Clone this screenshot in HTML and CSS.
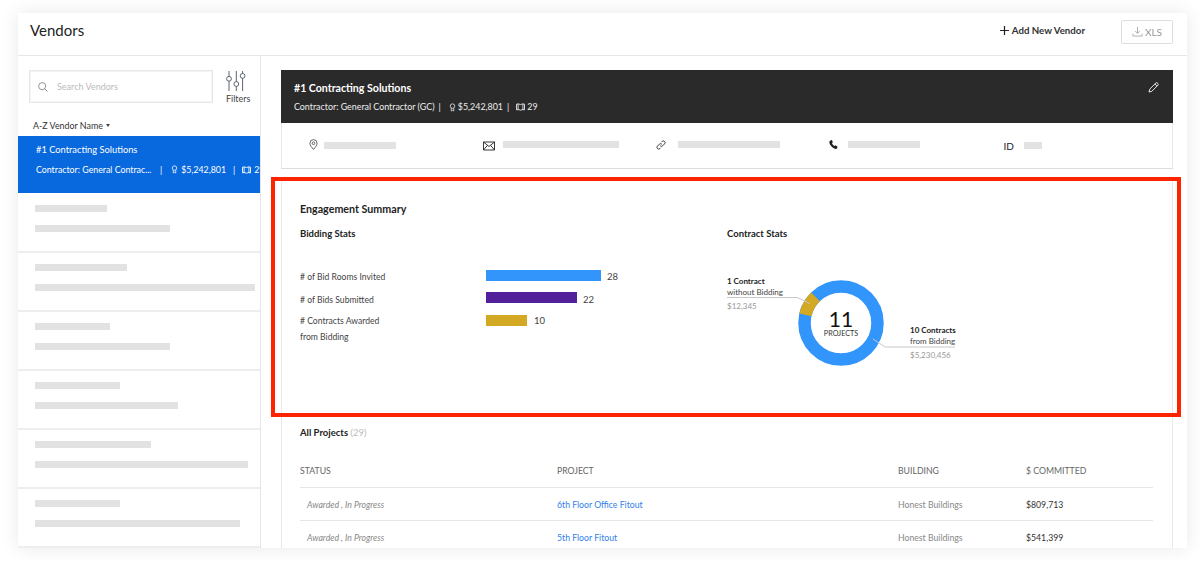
FILE: index.html
```html
<!DOCTYPE html>
<html lang="en">

<head>
  <meta charset="UTF-8">
  <meta name="viewport" content="width=device-width, initial-scale=1.0">
  <title>Vendors</title>
  <link rel="stylesheet" href="styles.css">
</head>

<body>
  <div class="app">
    <!-- header -->
    <header class="header">
      <h1 class="page-title">Vendors</h1>
      <div class="add-vendor">
        <svg class="add-icon" viewBox="0 0 11 11"><path d="M5.5 0v11M0 5.5h11" /></svg>
        Add New Vendor
      </div>
      <div class="xls-btn">
        <svg class="xls-icon" viewBox="0 0 12 12"><path d="M6 1v7M3.5 5.5L6 8l2.5-2.5M1 8.5V11h10V8.5" /></svg>
        XLS
      </div>
    </header>

    <div class="body">
      <!-- vendor list -->
      <aside class="sidebar">
        <div class="search-row">
          <div class="search-box">
            <svg class="search-icon" viewBox="0 0 11 11"><circle cx="4.6" cy="4.6" r="3.9" /><path d="M7.5 7.5l3 3" /></svg>
            <span>Search Vendors</span>
          </div>
          <div class="filters">
            <svg class="filters-icon" viewBox="0 0 20 20">
              <path d="M3 0v5.600M3 10v10M10.300 0v10.700M10.300 15.200V20M16.600 0v2.600M16.600 7.200V20" />
              <circle cx="3" cy="7.800" r="2.400" />
              <circle cx="10.300" cy="13" r="2.400" />
              <circle cx="16.600" cy="4.900" r="2.400" />
            </svg>
            <span>Filters</span>
          </div>
        </div>
        <div class="sort">A-Z Vendor Name <i class="caret"></i></div>

        <div class="vendor active">
          <div class="vendor-name">#1 Contracting Solutions</div>
          <div class="vendor-meta">
            <span class="vendor-type">Contractor: General Contrac...</span>
            <span class="sep">|</span>
            <svg class="meta-icon" viewBox="0 0 10 12"><circle cx="5" cy="4" r="3.200" /><path d="M3.200 7v4L5 10l1.800 1V7" /></svg>
            <span>$5,242,801</span>
            <span class="sep">|</span>
            <svg class="meta-icon wide" viewBox="0 0 12 10"><path d="M1 1.500q2.500-1 5 .5q2.500-1.500 5-.5v7q-2.500-1-5 .5q-2.500-1.500-5-.5zM3 1v8M9 1v8" /></svg>
            <span>29</span>
          </div>
        </div>

        <div class="vendor"><div class="bar-top" style="width: 72px"></div><div class="bar-bottom" style="width: 135px"></div></div>
        <div class="vendor"><div class="bar-top" style="width: 92px"></div><div class="bar-bottom" style="width: 220px"></div></div>
        <div class="vendor"><div class="bar-top" style="width: 75px"></div><div class="bar-bottom" style="width: 135px"></div></div>
        <div class="vendor"><div class="bar-top" style="width: 85px"></div><div class="bar-bottom" style="width: 143px"></div></div>
        <div class="vendor"><div class="bar-top" style="width: 116px"></div><div class="bar-bottom" style="width: 213px"></div></div>
        <div class="vendor"><div class="bar-top" style="width: 85px"></div><div class="bar-bottom" style="width: 205px"></div></div>
      </aside>

      <!-- vendor details -->
      <main class="main">
        <div class="vendor-card">
          <div class="card-head">
            <div>
              <div class="card-title">#1 Contracting Solutions</div>
              <div class="card-sub">
                <span>Contractor: General Contractor (GC)</span>
                <span class="sep">|</span>
                <svg class="meta-icon" viewBox="0 0 10 12"><circle cx="5" cy="4" r="3.200" /><path d="M3.200 7v4L5 10l1.800 1V7" /></svg>
                <span>$5,242,801</span>
                <span class="sep">|</span>
                <svg class="meta-icon wide" viewBox="0 0 12 10"><path d="M1 1.500q2.500-1 5 .5q2.500-1.500 5-.5v7q-2.500-1-5 .5q-2.500-1.500-5-.5zM3 1v8M9 1v8" /></svg>
                <span>29</span>
              </div>
            </div>
            <svg class="edit-icon" viewBox="0 0 11 11"><path d="M1 10l.7-2.800L7.900 1a1 1 0 0 1 1.400 0l.7.7a1 1 0 0 1 0 1.400L3.800 9.300zM6.900 2l2.100 2.100" /></svg>
          </div>
          <div class="card-info">
            <div class="info-cell">
              <svg class="info-icon" viewBox="0 0 10 12"><path d="M5 11.500C3 9 1 7 1 4.600a4 4 0 0 1 8 0C9 7 7 9 5 11.500z" /><circle cx="5" cy="4.600" r="1.500" /></svg>
              <div class="info-bar" style="width: 72px"></div>
            </div>
            <div class="info-cell">
              <svg class="info-icon mail" viewBox="0 0 12 10"><path d="M.5 1h11v8H.500zM.5 1L6 5.500 11.500 1M.5 9l4-4.700M11.500 9l-4-4.700" /></svg>
              <div class="info-bar mail-bar" style="width: 116px"></div>
            </div>
            <div class="info-cell">
              <svg class="info-icon link" viewBox="0 0 10 10"><path d="M4.200 5.800a1.700 1.700 0 0 0 2.400 0l2-2a1.700 1.700 0 0 0-2.400-2.400l-.8.8M5.800 4.200a1.700 1.700 0 0 0-2.400 0l-2 2a1.700 1.700 0 0 0 2.400 2.400l.8-.8" /></svg>
              <div class="info-bar link-bar" style="width: 102px"></div>
            </div>
            <div class="info-cell">
              <svg class="info-icon phone" viewBox="0 0 10 10"><path d="M1.500.500L3.300 0l1 2.400-1 .8c.4 1.400 1.500 2.700 3 3.400l1-.9L9.500 7.500 9 9.300C8.500 10 7.500 10 6.500 9.600 3.500 8.500 1.200 6 .4 3 .2 2 .7 1 1.500.500z" /></svg>
              <div class="info-bar phone-bar" style="width: 72px"></div>
            </div>
            <div class="info-cell">
              <span class="id-label">ID</span>
              <div class="info-bar id-bar" style="width: 18px"></div>
            </div>
          </div>
        </div>

        <div class="panel">
          <!-- engagement summary -->
          <section class="summary">
            <h2 class="summary-title">Engagement Summary</h2>
            <div class="summary-cols">
              <div>
                <h3 class="stats-title">Bidding Stats</h3>
                <div class="stats">
                  <div class="stat-row row-invited">
                    <div class="stat-label"># of Bid Rooms Invited</div>
                    <div class="stat-bar blue" style="width: 115px"></div>
                    <div class="stat-num">28</div>
                  </div>
                  <div class="stat-row row-submitted">
                    <div class="stat-label"># of Bids Submitted</div>
                    <div class="stat-bar purple" style="width: 91px"></div>
                    <div class="stat-num">22</div>
                  </div>
                  <div class="stat-row row-awarded">
                    <div class="stat-label"># Contracts Awarded<br>from Bidding</div>
                    <div class="stat-bar gold" style="width: 41px"></div>
                    <div class="stat-num">10</div>
                  </div>
                </div>
              </div>
              <div>
                <h3 class="stats-title">Contract Stats</h3>
                <div class="chart">
                  <svg class="leaders" viewBox="0 0 230 90">
                    <path d="M0 21.500h70l13 6M146 63l12 8h70" />
                  </svg>
                  <div class="legend legend-left">
                    <b>1 Contract</b>
                    <span>without Bidding</span>
                    <em>$12,345</em>
                  </div>
                  <div class="donut">
                    <svg viewBox="0 0 86 86">
                      <circle class="ring-blue" cx="43" cy="43" r="36.500" />
                      <circle class="ring-gold" cx="43" cy="43" r="36.500" />
                    </svg>
                    <div class="donut-label">
                      <strong>11</strong>
                      <span>PROJECTS</span>
                    </div>
                  </div>
                  <div class="legend legend-right">
                    <b>10 Contracts</b>
                    <span>from Bidding</span>
                    <em>$5,230,456</em>
                  </div>
                </div>
              </div>
            </div>
          </section>

          <!-- projects -->
          <section class="projects">
            <h2 class="projects-title">All Projects <span>(29)</span></h2>
            <div class="table-row table-head">
              <div>STATUS</div>
              <div>PROJECT</div>
              <div>BUILDING</div>
              <div>$ COMMITTED</div>
            </div>
            <div class="table-row">
              <div class="status">Awarded , In Progress</div>
              <div class="project">6th Floor Office Fitout</div>
              <div class="building">Honest Buildings</div>
              <div class="amount">$809,713</div>
            </div>
            <div class="table-row">
              <div class="status">Awarded , In Progress</div>
              <div class="project">5th Floor Fitout</div>
              <div class="building">Honest Buildings</div>
              <div class="amount">$541,399</div>
            </div>
          </section>
        </div>
      </main>
    </div>
  </div>

  <!-- red highlight over the summary -->
  <div class="highlight"></div>
</body>

</html>
```

FILE: styles.css
```css
* {
  margin: 0;
  padding: 0;
  box-sizing: border-box;
}

body {
  font-family: Lato, "Noto Sans", sans-serif;
  background: #fff;
  color: #333;
  overflow: hidden;
  height: 561px;
  padding: 13px 13px 0 18px;
}

svg {
  display: block;
  fill: none;
  flex: none;
}

.app {
  width: 1169px;
  height: 535px;
  background: #fff;
  box-shadow: 0 0 18px rgba(0, 0, 0, 0.09);
  overflow: hidden;
}

/* header */
.header {
  height: 43px;
  border-bottom: 1px solid #e6e6e6;
  display: flex;
  align-items: center;
  padding: 0 14px 6px 12px;
}

.page-title {
  font-size: 15px;
  font-weight: 400;
  color: #222;
  flex: 1;
  margin-top: -2px;
}

.add-vendor {
  display: flex;
  align-items: center;
  gap: 3px;
  font-size: 9.700px;
  font-weight: 700;
  color: #333;
  margin-right: 36px;
  margin-top: -2px;
}

.add-icon {
  width: 9px;
  height: 9px;
  stroke: #222;
  stroke-width: 1.500;
}

.xls-btn {
  width: 52px;
  height: 24px;
  border: 1px solid #dedede;
  border-radius: 2px;
  display: flex;
  align-items: center;
  justify-content: center;
  gap: 2px;
  font-size: 10px;
  color: #999;
  margin-top: 1px;
}

.xls-icon {
  width: 11px;
  height: 11px;
  stroke: #aaa;
  stroke-width: 1;
}

.body {
  display: flex;
  height: 492px;
}

/* sidebar */
.sidebar {
  width: 243px;
  flex: none;
  border-right: 1px solid #e6e6e6;
  padding-top: 14px;
  overflow: hidden;
}

.search-row {
  display: flex;
  padding-left: 11px;
  height: 32px;
}

.search-box {
  width: 184px;
  height: 33px;
  border: 1px solid #e8e8e8;
  box-shadow: inset 0 0 0 1px #f3f3f3;
  display: flex;
  align-items: center;
  padding-left: 8px;
  font-size: 9px;
  color: #bbb;
}

.search-icon {
  width: 10px;
  height: 10px;
  stroke: #888;
  stroke-width: 1;
  margin-right: 9px;
}

.filters {
  margin-left: 13px;
  display: flex;
  flex-direction: column;
  font-size: 9px;
  color: #444;
}

.filters-icon {
  width: 20px;
  height: 20px;
  stroke: #5b6570;
  stroke-width: 1;
  margin: 1px 0 2px;
}

.sort {
  margin-top: 16px;
  height: 18px;
  padding-left: 15px;
  font-size: 8.900px;
  line-height: 15px;
  color: #333;
}

.caret {
  display: inline-block;
  margin-left: 1px;
  vertical-align: 2px;
  border: 2.500px solid transparent;
  border-top: 3px solid #444;
  border-bottom: 0;
}

.vendor {
  height: 59px;
  border-bottom: 2px solid #eee;
  padding: 11px 0 0 17px;
}

.vendor.active {
  height: 57px;
  margin-bottom: 1px;
  background: #0868de;
  border-bottom: 0;
  color: #fff;
  padding: 7px 0 0 18px;
  overflow: hidden;
}

.vendor-name {
  font-size: 9.300px;
  line-height: 13px;
}

.vendor-meta {
  display: flex;
  align-items: center;
  white-space: nowrap;
  font-size: 8.800px;
  line-height: 13px;
  margin-top: 7px;
}

.vendor-meta span {
  flex: none;
}

.vendor-type {
  width: 117px;
}

.vendor-meta .sep {
  margin: 0 9px 0 7px;
}

.meta-icon {
  width: 7px;
  height: 9px;
  stroke: currentColor;
  stroke-width: 1.100;
  margin-right: 3px;
}

.meta-icon.wide {
  width: 11px;
  height: 8px;
  margin-left: -3px;
  margin-right: 2px;
}

.bar-top,
.bar-bottom {
  height: 7px;
  background: #e2e2e2;
}

.bar-bottom {
  margin-top: 13px;
}

/* main */
.main {
  flex: 1;
  padding: 14px 14px 0 20px;
  min-width: 0;
}

.card-head {
  height: 53px;
  background: #2a2a2a;
  color: #fff;
  padding: 11px 14px 0 13px;
  display: flex;
  justify-content: space-between;
}

.card-title {
  font-size: 10.600px;
  font-weight: 700;
  line-height: 14px;
}

.card-sub {
  display: flex;
  align-items: center;
  font-size: 8.900px;
  line-height: 14px;
  margin-top: 5px;
  color: #eee;
}

.card-sub .sep {
  margin: 0 8px 0 4px;
}

.card-sub .meta-icon {
  margin-right: 2px;
}

.card-sub .meta-icon.wide {
  margin-left: -2px;
  margin-right: 1px;
}

.edit-icon {
  width: 11px;
  height: 11px;
  stroke: #fff;
  stroke-width: 0.900;
  margin-top: 1px;
}

.card-info {
  height: 46px;
  display: grid;
  grid-template-columns: repeat(5, 173.600px);
  padding-left: 27px;
  align-items: center;
  border: 1px solid #e8e8e8;
  border-top: 0;
  border-bottom-color: #ddd;
}

.info-cell {
  display: flex;
  align-items: center;
}

.info-icon {
  width: 9px;
  height: 11px;
  stroke: #444;
  stroke-width: 0.900;
  margin: -3px 6px 0 0;
}

.info-icon.mail {
  width: 12px;
  height: 10px;
  stroke: #222;
  margin: 0 8px 0 0;
}

.info-icon.link {
  width: 10px;
  height: 10px;
  stroke: #222;
  margin: -2px 12px 0 0;
}

.info-icon.phone {
  width: 9px;
  height: 9px;
  fill: #222;
  stroke: none;
  margin: -3px 10px 0 -1px;
}

.info-bar {
  height: 7px;
  background: #e2e2e2;
}

.mail-bar,
.link-bar,
.phone-bar {
  margin-top: -2px;
}

.id-label {
  font-size: 10px;
  margin-right: 10px;
  color: #222;
}

/* summary */
.panel {
  margin-top: 11px;
  border-left: 1px solid #e8e8e8;
  border-right: 1px solid #e8e8e8;
  padding: 0 19px 0 18px;
}

.summary {
  height: 235px;
  padding-top: 22px;
}

.summary-title {
  font-size: 10.700px;
  font-weight: 700;
  line-height: 14px;
  color: #222;
}

.summary-cols {
  display: grid;
  grid-template-columns: 427px 1fr;
  margin-top: 11px;
}

.stats-title {
  font-size: 9.500px;
  font-weight: 700;
  line-height: 14px;
  color: #222;
}

.stats {
  margin-top: 28px;
}

.stat-row {
  display: flex;
  align-items: flex-start;
  font-size: 8.600px;
  line-height: 16px;
  color: #444;
}

.row-invited {
  height: 23px;
}

.row-submitted {
  height: 21px;
}

.stat-label {
  width: 186px;
  flex: none;
}

.stat-bar {
  height: 11px;
}

.row-invited .stat-bar {
  margin-top: 1px;
}

.row-awarded .stat-bar {
  margin-top: 2px;
}

.stat-num {
  margin-left: 6px;
  font-size: 9.500px;
}

.row-awarded .stat-num {
  margin-left: 7px;
}

.blue {
  background: #3295fb;
}

.purple {
  background: #53209b;
}

.gold {
  background: #d3a823;
}

/* donut chart */
.chart {
  position: relative;
  display: flex;
  margin-top: 35px;
  width: 232px;
}

.leaders {
  position: absolute;
  left: 0;
  top: 0;
  z-index: 1;
  width: 230px;
  height: 90px;
  stroke: #c8c8c8;
  stroke-width: 1;
}

.legend {
  display: flex;
  flex-direction: column;
  font-size: 8px;
  line-height: 11px;
  color: #444;
  white-space: nowrap;
}

.legend b {
  color: #222;
}

.legend em {
  font-style: normal;
  color: #999;
  margin-top: 3px;
}

.legend-left {
  width: 71px;
}

.legend-right {
  margin: 49px 0 0 26px;
}

.donut {
  position: relative;
  width: 86px;
  height: 86px;
  flex: none;
  margin-top: 4px;
}

.ring-blue,
.ring-gold {
  stroke-width: 12.500;
}

.ring-blue {
  stroke: #3295fb;
}

.ring-gold {
  stroke: #d3a823;
  stroke-dasharray: 20.800 300;
  transform: rotate(-167deg);
  transform-origin: 43px 43px;
}

.donut-label {
  position: absolute;
  left: 0;
  right: 0;
  top: 28px;
  text-align: center;
}

.donut-label strong {
  display: block;
  font-size: 21px;
  font-weight: 400;
  line-height: 21px;
  color: #111;
}

.donut-label span {
  display: block;
  font-size: 7.200px;
  line-height: 9px;
  color: #333;
}

/* projects table */
.projects-title {
  margin-top: 11px;
  font-size: 9.500px;
  font-weight: 700;
  line-height: 14px;
  color: #222;
}

.projects-title span {
  font-weight: 400;
  color: #bbb;
}

.table-row {
  display: grid;
  grid-template-columns: 257px 341px 128px 126px;
  align-items: center;
  height: 33px;
  border-bottom: 1px solid #e6e6e6;
  font-size: 8.700px;
}

.table-head {
  margin-top: 15px;
  padding-bottom: 2px;
  color: #666;
}

.status {
  font-style: italic;
  color: #888;
  padding-left: 7px;
}

.project {
  color: #2f80ed;
}

.building {
  color: #888;
}

.amount {
  color: #333;
}

/* annotation */
.highlight {
  position: absolute;
  left: 271px;
  top: 177px;
  width: 910px;
  height: 240px;
  border: 4px solid #fe2400;
}
```
